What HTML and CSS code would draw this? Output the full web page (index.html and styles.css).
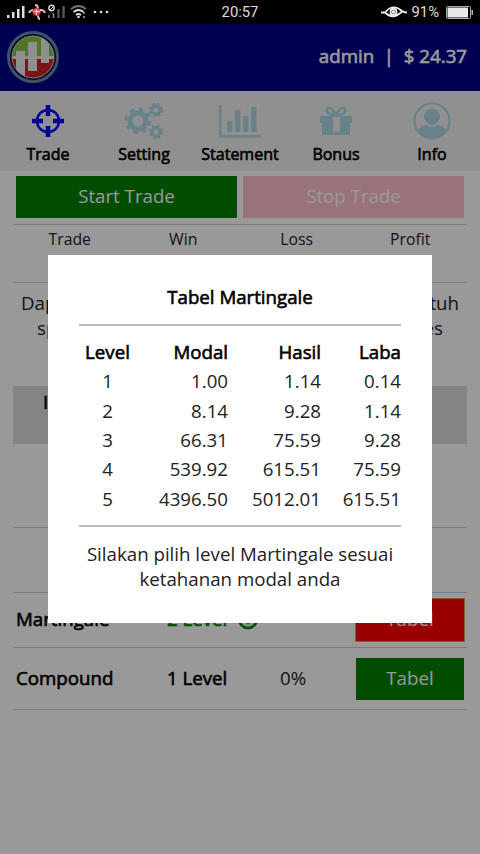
FILE: index.html
```html
<!DOCTYPE html>
<html lang="id">
<head>
    <meta charset="UTF-8">
    <meta name="viewport" content="width=device-width, initial-scale=1.0">
    <title>Trade</title>
    <link rel="stylesheet" href="styles.css">
</head>
<body>
    <div class="statusbar">
        <svg class="signals" width="110" height="24" viewBox="0 0 110 24">
            <g fill="#ddd">
                <rect x="7" y="15" width="2.5" height="3"/>
                <rect x="12" y="12" width="2.5" height="6"/>
                <rect x="17" y="9" width="2.5" height="9"/>
                <rect x="22" y="6" width="2.5" height="12"/>
            </g>
            <path d="M35 5q3 0 3 4v6q0 4 2 4M29 13q1-3 5-3h7q3 0 4 3" fill="none" stroke="#e8b8b8" stroke-width="2"/>
            <circle cx="36.500" cy="12" r="4" fill="#d22c38"/>
            <path d="M36.500 9v6M33.500 11.500h7" stroke="#f0c8c8" stroke-width="1.500"/>
            <circle cx="51.500" cy="8" r="2.7" fill="none" stroke="#ddd" stroke-width="1.4"/>
            <path d="M50 10l4-4" stroke="#ddd"/>
            <path d="M49 15v3M53.500 13v5" stroke="#888" stroke-width="1.6"/>
            <path d="M58.500 9v9M63.500 6v12" stroke="#555" stroke-width="2.400"/>
            <g fill="none" stroke="#ddd" stroke-width="1.700">
                <path d="M71 9q7.500-6 15 0" stroke="#777"/>
                <path d="M73.500 12q5-4 10 0M76 15q2.500-2 5 0"/>
            </g>
            <circle cx="78.500" cy="17" r="1.300" fill="#ddd"/>
            <path d="M84 12v2M84 16v2" stroke="#aaa" stroke-width="1.500"/>
            <g fill="#ddd"><circle cx="95" cy="12" r="1.300"/><circle cx="101" cy="12" r="1.300"/><circle cx="107" cy="12" r="1.300"/></g>
        </svg>
        <span class="clock">20:57</span>
        <div class="battery">
            <svg width="28" height="14" viewBox="0 0 28 14" fill="none" stroke="#eee" stroke-width="1.800">
                <path d="M1 7.500h4Q13-2 22 6q2 1.500 5 1.500M5 7.500q8 8 17-1"/>
                <circle cx="13.500" cy="7" r="3"/>
                <circle cx="13.500" cy="7" r=".8"/>
            </svg>
            <span>91%</span>
            <svg width="28" height="13" viewBox="0 0 28 13">
                <rect x=".5" y=".5" width="24" height="12" rx="1" fill="none" stroke="#aaa"/>
                <rect x="1.500" y="1.500" width="20.500" height="10" fill="#e8e8e8"/>
                <path d="M25.500 4h1.500v5h-1.500z" fill="#aaa"/>
            </svg>
        </div>
    </div>

    <div class="header">
        <svg class="logo" width="54" height="54" viewBox="0 0 54 54">
            <defs><clipPath id="disc"><circle cx="27" cy="27" r="21"/></clipPath></defs>
            <circle cx="27" cy="27" r="24.500" fill="#000050" stroke="#6c8ba8" stroke-width="3"/>
            <g clip-path="url(#disc)">
                <path d="M0 0h54v28H0z" fill="#86c440"/>
                <path d="M0 28h54v26H0z" fill="#cf2027"/>
                <path d="M0 26h54v3H0z" fill="#f5ecd8"/>
                <g fill="#eee">
                    <rect x="10" y="21" width="9" height="28"/>
                    <rect x="22" y="12" width="9" height="29"/>
                    <rect x="35" y="8" width="8" height="25"/>
                </g>
            </g>
            <circle cx="27" cy="27" r="21" fill="none" stroke="#ddd" stroke-width="1"/>
        </svg>
        <span class="bold">admin&nbsp; |&nbsp; $ 24.37</span>
    </div>

    <div class="nav">
        <div class="tab active">
            <svg width="40" height="40" viewBox="0 0 40 40">
                <circle cx="20" cy="20" r="11" fill="none" stroke="currentColor" stroke-width="2.500"/>
                <path d="M20 4v11M20 25v11M4 20h11M25 20h11" stroke="currentColor" stroke-width="4.500"/>
            </svg>
            <span class="bold">Trade</span>
        </div>
        <div class="tab">
            <svg width="40" height="40" viewBox="0 0 40 40" fill="none" stroke="currentColor">
                <circle cx="14" cy="20" r="8" stroke-width="5"/>
                <circle cx="14" cy="20" r="11.700" stroke-width="3.500" stroke-dasharray="4.600 4.590"/>
                <circle cx="32" cy="9" r="4" stroke-width="3"/>
                <circle cx="32" cy="9" r="6" stroke-width="2.500" stroke-dasharray="2.700 2.010"/>
                <circle cx="32" cy="31" r="4" stroke-width="3"/>
                <circle cx="32" cy="31" r="6" stroke-width="2.500" stroke-dasharray="2.700 2.010"/>
            </svg>
            <span class="bold">Setting</span>
        </div>
        <div class="tab">
            <svg width="44" height="40" viewBox="0 0 44 40" fill="currentColor">
                <path d="M1 4h2.500v30H43v2.500H1z"/>
                <path d="M9 20h5.500v11H9zM17 9h5.500v22H17zM25 15h5.500v16H25zM33 6h5.500v25H33z"/>
            </svg>
            <span class="bold">Statement</span>
        </div>
        <div class="tab">
            <svg width="40" height="40" viewBox="0 0 40 40">
                <path d="M4 15h32v7h-2v12H6V22H4z" fill="currentColor"/>
                <path d="M17 16h7v15h-7z" fill="#f1f1f1"/>
                <path d="M20 14q-4-8-8-7-3 2 0 5 2 2 8 2zM20 14q4-8 8-7 3 2 0 5-2 2-8 2z" fill="none" stroke="currentColor" stroke-width="2.500"/>
            </svg>
            <span class="bold">Bonus</span>
        </div>
        <div class="tab">
            <svg width="40" height="40" viewBox="0 0 40 40">
                <defs><clipPath id="face"><circle cx="20" cy="20" r="17"/></clipPath></defs>
                <circle cx="20" cy="20" r="17.500" fill="none" stroke="currentColor" stroke-width="2"/>
                <g fill="currentColor" clip-path="url(#face)">
                    <circle cx="20" cy="15.500" r="8"/>
                    <path d="M5 40V30q4-5 9-6 6 4 12 0 5 1 9 6v10z"/>
                </g>
            </svg>
            <span class="bold">Info</span>
        </div>
    </div>

    <div class="content">
        <div class="buttons">
            <div class="btn start">Start Trade</div>
            <div class="btn stop">Stop Trade</div>
        </div>
        <div class="stats">
            <span>Trade</span><span>Win</span><span>Loss</span><span>Profit</span>
        </div>
        <div class="note">
            <div class="line first"><span>Dapat</span><span>butuh</span></div>
            <div class="line second"><span>spa</span><span>tes</span></div>
        </div>
        <div class="panel bold">I</div>
        <div class="blank"></div>
        <div class="gap"></div>
        <div class="row martingale">
            <span class="bold">Martingale</span>
            <span class="bold green">2 Level</span>
            <svg width="22" height="22" viewBox="0 0 22 22" fill="none" stroke="#008000">
                <circle cx="11" cy="10" r="9" fill="#d4f0d4" stroke-width="2.500"/>
                <path d="M7 10l4 4 5-6" stroke-width="2"/>
            </svg>
            <div class="btn red">Tabel</div>
        </div>
        <div class="row compound">
            <span class="bold">Compound</span>
            <span class="bold">1 Level</span>
            <span class="percent">0%</span>
            <div class="btn start">Tabel</div>
        </div>
    </div>

    <div class="overlay">
        <div class="modal">
            <div class="title bold">Tabel Martingale</div>
            <table>
                <tr class="bold"><th>Level</th><th>Modal</th><th>Hasil</th><th>Laba</th></tr>
                <tr><td>1</td><td>1.00</td><td>1.14</td><td>0.14</td></tr>
                <tr><td>2</td><td>8.14</td><td>9.28</td><td>1.14</td></tr>
                <tr><td>3</td><td>66.31</td><td>75.59</td><td>9.28</td></tr>
                <tr><td>4</td><td>539.92</td><td>615.51</td><td>75.59</td></tr>
                <tr><td>5</td><td>4396.50</td><td>5012.01</td><td>615.51</td></tr>
            </table>
            <p>Silakan pilih level Martingale sesuai ketahanan modal anda</p>
        </div>
    </div>
</body>
</html>
```
FILE: styles.css
```css
* {
    box-sizing: border-box;
}
body {
    margin: 0;
    height: 854px;
    overflow: hidden;
    background: #fff;
    color: #222;
    font-family: "Open Sans", "Noto Sans", sans-serif;
    font-size: 18.7px;
}
svg {
    display: block;
}
.bold {
    color: #000;
    -webkit-text-stroke: 0.6px currentColor;
}
.statusbar {
    display: grid;
    grid-template-columns: 1fr auto 1fr;
    align-items: center;
    height: 24px;
    background: #000;
    color: #ddd;
    font-family: Roboto, sans-serif;
    font-size: 14.8px;
}
.battery {
    display: flex;
    align-items: center;
    justify-content: flex-end;
    gap: 4px;
    padding-right: 6px;
}
.battery svg:last-child {
    margin-left: 3px;
}
.header {
    display: flex;
    align-items: center;
    justify-content: space-between;
    height: 67px;
    padding: 0 13px 1px 6px;
    background: #00008b;
}
.header .bold {
    padding-bottom: 3px;
    color: #fff;
}
/* menu */
.nav {
    display: grid;
    grid-template-columns: repeat(5, 1fr);
    height: 80px;
    padding-top: 10px;
    background: #f1f1f1;
    font-size: 16px;
}
.tab {
    display: flex;
    flex-direction: column;
    align-items: center;
    color: #add8e6;
}
.tab .bold {
    margin-top: 1px;
    line-height: 24px;
    color: #000;
}
.active {
    color: #0000ff;
}
.content {
    padding: 5px 13px 0;
}
.buttons {
    display: grid;
    grid-template-columns: 1fr 1fr;
    gap: 6px;
    padding: 0 3px;
}
.btn {
    height: 42px;
    line-height: 40px;
    text-align: center;
    color: #fff;
}
.start {
    background: #008000;
}
.stop {
    background: #ffc0cb;
}
.red {
    background: #ff0000;
    outline: 1px solid #e5a050;
}
.stats {
    display: grid;
    grid-template-columns: repeat(4, 1fr);
    height: 59px;
    margin-top: 6px;
    border-top: 1px solid #ccc;
    border-bottom: 1px solid #ccc;
    text-align: center;
    font-size: 15.8px;
    line-height: 28px;
}
.note {
    height: 103px;
    padding-top: 7px;
}
.line {
    display: flex;
    justify-content: space-between;
    line-height: 25px;
}
.first {
    padding: 0 8px;
}
.second {
    padding: 0 24px;
}
.panel {
    height: 58px;
    padding: 3px 30px;
    background: #ddd;
}
.blank {
    height: 84px;
    border-bottom: 1px solid #ccc;
}
.gap {
    height: 65px;
    border-bottom: 1px solid #ccc;
}
.row {
    display: grid;
    grid-template-columns: 151px 70px 1fr 108px;
    align-items: center;
    padding: 0 3px;
    border-bottom: 1px solid #ccc;
}
.row span {
    padding-bottom: 3px;
}
.martingale {
    height: 55px;
}
.compound {
    height: 62px;
}
.green {
    color: #008000;
}
.row .percent {
    padding-left: 43px;
}
/* popup */
.overlay {
    position: absolute;
    top: 24px;
    right: 0;
    bottom: 0;
    left: 0;
    padding: 231px 48px 0;
    background: rgba(0, 0, 0, 0.4);
}
.modal {
    height: 368px;
    padding: 29px 31px 0;
    background: #fff;
    text-align: center;
}
.title {
    height: 42px;
    line-height: 26px;
    border-bottom: 2px solid #bbb;
}
table {
    width: 100%;
    margin: 11px 0 12px;
    border-collapse: collapse;
    table-layout: fixed;
}
th, td {
    height: 29.3px;
    padding: 0;
    line-height: 29px;
    font-weight: normal;
    text-align: right;
}
th:first-child, td:first-child {
    width: 57px;
    text-align: center;
}
th:nth-child(3), td:nth-child(3) {
    width: 93px;
}
th:nth-child(4), td:nth-child(4) {
    width: 80px;
}
p {
    margin: 0;
    padding-top: 14px;
    border-top: 2px solid #bbb;
    line-height: 25px;
}
```
